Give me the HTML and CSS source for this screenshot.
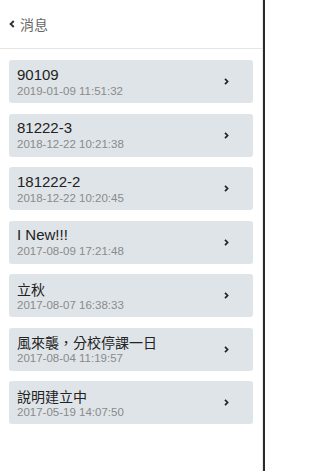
FILE: index.html
```html
<!DOCTYPE html>
<html lang="zh-Hant">
<head>
<meta charset="utf-8">
<title>消息</title>
<link rel="stylesheet" href="styles.css">
</head>
<body>
<div class="screen">
  <div class="app">
    <header class="header">
      <svg class="back" width="6" height="8" viewBox="0 0 6 8"><path d="M4.8 1 L1.6 4 L4.8 7" fill="none" stroke="#333" stroke-width="1.9"/></svg>
      <span class="header-title">消息</span>
    </header>
    <main class="list">
      <div class="card"><div class="text"><div class="title">90109</div><div class="date">2019-01-09 11:51:32</div></div><svg class="chev" width="5" height="7" viewBox="0 0 5 7"><path d="M1 0.8 L3.6 3.5 L1 6.2" fill="none" stroke="#222" stroke-width="1.7"/></svg></div>
      <div class="card"><div class="text"><div class="title">81222-3</div><div class="date">2018-12-22 10:21:38</div></div><svg class="chev" width="5" height="7" viewBox="0 0 5 7"><path d="M1 0.8 L3.6 3.5 L1 6.2" fill="none" stroke="#222" stroke-width="1.7"/></svg></div>
      <div class="card"><div class="text"><div class="title">181222-2</div><div class="date">2018-12-22 10:20:45</div></div><svg class="chev" width="5" height="7" viewBox="0 0 5 7"><path d="M1 0.8 L3.6 3.5 L1 6.2" fill="none" stroke="#222" stroke-width="1.7"/></svg></div>
      <div class="card"><div class="text"><div class="title">I New!!!</div><div class="date">2017-08-09 17:21:48</div></div><svg class="chev" width="5" height="7" viewBox="0 0 5 7"><path d="M1 0.8 L3.6 3.5 L1 6.2" fill="none" stroke="#222" stroke-width="1.7"/></svg></div>
      <div class="card"><div class="text"><div class="title cjk">立秋</div><div class="date">2017-08-07 16:38:33</div></div><svg class="chev" width="5" height="7" viewBox="0 0 5 7"><path d="M1 0.8 L3.6 3.5 L1 6.2" fill="none" stroke="#222" stroke-width="1.7"/></svg></div>
      <div class="card"><div class="text"><div class="title cjk">風來襲，分校停課一日</div><div class="date">2017-08-04 11:19:57</div></div><svg class="chev" width="5" height="7" viewBox="0 0 5 7"><path d="M1 0.8 L3.6 3.5 L1 6.2" fill="none" stroke="#222" stroke-width="1.7"/></svg></div>
      <div class="card"><div class="text"><div class="title cjk">說明建立中</div><div class="date">2017-05-19 14:07:50</div></div><svg class="chev" width="5" height="7" viewBox="0 0 5 7"><path d="M1 0.8 L3.6 3.5 L1 6.2" fill="none" stroke="#222" stroke-width="1.7"/></svg></div>
    </main>
  </div>
</div>
</body>
</html>
```

FILE: styles.css
```css
html, body {
  margin: 0;
  padding: 0;
  background: #ffffff;
}
body {
  font-family: "Liberation Sans", "Noto Sans CJK TC", sans-serif;
  color: #222;
}
.screen {
  width: 263px;
  height: 471px;
  border-right: 2px solid #2b2b2b;
}
.app {
  height: 100%;
  border-right: 1px solid #e8e8e8;
  background: #fff;
}
.header {
  height: 48px;
  border-bottom: 1px solid #e6e6e6;
  display: flex;
  align-items: center;
  padding-left: 9px;
  gap: 5px;
}
.back {
  display: block;
}
.header-title {
  font-family: "Noto Sans CJK TC", sans-serif;
  font-size: 14px;
  color: #666;
  line-height: 18px;
}
.list {
  padding: 11px 9px 0 9px;
  display: flex;
  flex-direction: column;
  gap: 10.5px;
}
.card {
  height: 43px;
  box-sizing: border-box;
  background: #dfe4e8;
  border-radius: 3px;
  display: flex;
  align-items: center;
  padding: 0 24px 0 8px;
}
.text {
  flex: 1;
  min-width: 0;
}
.title {
  font-size: 15px;
  line-height: 18px;
  color: #222;
  white-space: nowrap;
}
.title.cjk {
  font-family: "Noto Sans CJK TC", sans-serif;
  font-size: 14px;
}
.date {
  font-size: 11.5px;
  line-height: 14px;
  color: #8a8a8a;
}
.chev {
  display: block;
}
```
